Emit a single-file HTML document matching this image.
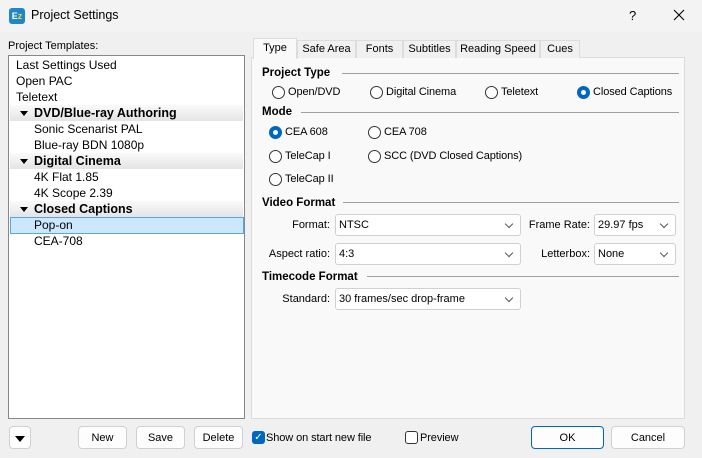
<!DOCTYPE html>
<html><head><meta charset="utf-8"><style>
*{margin:0;padding:0;box-sizing:border-box}
body{width:702px;height:458px;overflow:hidden;background:#f0f0f0;font-family:"Liberation Sans",sans-serif;font-size:11px;color:#000;position:relative}
.a{position:absolute;white-space:nowrap}
.li{position:absolute;left:16px;font-size:12px;line-height:16px}
.sub{left:34px}
.grp{position:absolute;left:10px;width:233px;height:16px;background:linear-gradient(#fafafa,#e4e4e4);font-weight:bold;font-size:12.5px;line-height:16px;padding-left:24px}
.grp:before{content:"";position:absolute;left:10px;top:6px;border-left:4px solid transparent;border-right:4px solid transparent;border-top:5px solid #000}
.tab{position:absolute;top:40px;height:18px;border:1px solid #dcdcdc;border-bottom:none;background:#f0f0f0;text-align:center;line-height:17px;font-size:11px}
.h{position:absolute;left:262px;font-weight:bold;font-size:11.5px;line-height:14px}
.line{position:absolute;height:1px;background:#a0a0a0}
.r{position:absolute;width:13px;height:13px;border:1px solid #333;border-radius:50%;background:#fff}
.r.on{background:#0067c0;border-color:#0067c0}
.r.on:after{content:"";position:absolute;left:3px;top:3px;width:5px;height:5px;border-radius:50%;background:#fff}
.t{position:absolute;font-size:11px;line-height:13px;letter-spacing:-0.1px}
.cb{position:absolute;height:22px;background:#fff;border:1px solid #d0d0d0;border-radius:3px;font-size:11px;line-height:21px;padding-left:3px}
.cb:after{content:"";position:absolute;right:8px;top:6px;width:5px;height:5px;border-right:1px solid #555;border-bottom:1px solid #555;transform:rotate(45deg)}
.lb{position:absolute;text-align:right;font-size:11px;line-height:13px}
.btn{position:absolute;top:426px;height:23px;background:#fdfdfd;border:1px solid #d0d0d0;border-radius:4px;text-align:center;line-height:22px;font-size:11px}
</style></head><body>
<div class="a" style="left:0;top:0;width:702px;height:32px;background:#f3f3f3"></div>
<div class="a" style="left:9px;top:8px;width:16px;height:16px;border-radius:3px;background:#1f87c9;color:#fff;font-size:9px;font-weight:bold;line-height:16px;text-align:center">E<span style="color:#ffd23c">z</span></div>
<div class="a" style="left:31px;top:8px;font-size:12.5px">Project Settings</div>
<div class="a" style="left:629px;top:8px;font-size:13px">?</div>
<svg class="a" style="left:673px;top:9px" width="12" height="12"><path d="M1 1L11 11M11 1L1 11" stroke="#000" stroke-width="1.1"/></svg>

<div class="a" style="left:8px;top:40px;font-size:11px">Project Templates:</div>
<div class="a" style="left:8px;top:55px;width:237px;height:364px;background:#fff;border:1px solid #828790"></div>
<div class="li" style="top:57px">Last Settings Used</div>
<div class="li" style="top:73px">Open PAC</div>
<div class="li" style="top:89px">Teletext</div>
<div class="grp" style="top:105px">DVD/Blue-ray Authoring</div>
<div class="li sub" style="top:121px">Sonic Scenarist PAL</div>
<div class="li sub" style="top:137px">Blue-ray BDN 1080p</div>
<div class="grp" style="top:153px">Digital Cinema</div>
<div class="li sub" style="top:169px">4K Flat 1.85</div>
<div class="li sub" style="top:185px">4K Scope 2.39</div>
<div class="grp" style="top:201px">Closed Captions</div>
<div class="a" style="left:10px;top:217px;width:234px;height:17px;background:#cce8ff;border:1px solid #5ba4dc"></div>
<div class="li sub" style="top:217px">Pop-on</div>
<div class="li sub" style="top:233px">CEA-708</div>

<div class="a" style="left:251px;top:57px;width:434px;height:362px;background:#f9f9f9;border:1px solid #dcdcdc"></div>
<div class="tab" style="left:297px;width:59px">Safe Area</div>
<div class="tab" style="left:356px;width:47px">Fonts</div>
<div class="tab" style="left:403px;width:53px">Subtitles</div>
<div class="tab" style="left:456px;width:84px">Reading Speed</div>
<div class="tab" style="left:540px;width:40px">Cues</div>
<div class="tab" style="left:253px;top:38px;width:44px;height:21px;background:#f9f9f9;line-height:19px">Type</div>

<div class="h" style="top:66px">Project Type</div><div class="line" style="left:342px;top:73px;width:337px"></div>
<div class="r" style="left:272px;top:86px"></div><div class="t" style="left:288px;top:86px">Open/DVD</div>
<div class="r" style="left:370px;top:86px"></div><div class="t" style="left:386px;top:86px">Digital Cinema</div>
<div class="r" style="left:485px;top:86px"></div><div class="t" style="left:501px;top:86px">Teletext</div>
<div class="r on" style="left:577px;top:86px"></div><div class="t" style="left:593px;top:86px">Closed Captions</div>

<div class="h" style="top:105px">Mode</div><div class="line" style="left:301px;top:112px;width:378px"></div>
<div class="r on" style="left:269px;top:126px"></div><div class="t" style="left:285px;top:126px">CEA 608</div>
<div class="r" style="left:368px;top:126px"></div><div class="t" style="left:384px;top:126px">CEA 708</div>
<div class="r" style="left:269px;top:150px"></div><div class="t" style="left:285px;top:150px">TeleCap I</div>
<div class="r" style="left:368px;top:150px"></div><div class="t" style="left:384px;top:150px">SCC (DVD Closed Captions)</div>
<div class="r" style="left:269px;top:173px"></div><div class="t" style="left:285px;top:173px">TeleCap II</div>

<div class="h" style="top:196px">Video Format</div><div class="line" style="left:343px;top:202px;width:336px"></div>
<div class="lb" style="left:260px;width:70px;top:219px">Format:</div>
<div class="cb" style="left:335px;top:214px;width:186px">NTSC</div>
<div class="lb" style="left:520px;width:70px;top:219px">Frame Rate:</div>
<div class="cb" style="left:594px;top:214px;width:82px">29.97 fps</div>
<div class="lb" style="left:260px;width:70px;top:248px">Aspect ratio:</div>
<div class="cb" style="left:335px;top:243px;width:186px">4:3</div>
<div class="lb" style="left:520px;width:70px;top:248px">Letterbox:</div>
<div class="cb" style="left:594px;top:243px;width:82px">None</div>

<div class="h" style="top:270px">Timecode Format</div><div class="line" style="left:367px;top:276px;width:312px"></div>
<div class="lb" style="left:260px;width:70px;top:293px">Standard:</div>
<div class="cb" style="left:335px;top:288px;width:186px">30 frames/sec drop-frame</div>

<div class="btn" style="left:9px;width:22px"><span style="position:absolute;left:5px;top:9px;border-left:5px solid transparent;border-right:5px solid transparent;border-top:6px solid #000"></span></div>
<div class="btn" style="left:78px;width:49px">New</div>
<div class="btn" style="left:136px;width:49px">Save</div>
<div class="btn" style="left:194px;width:49px">Delete</div>
<div class="a" style="left:252px;top:431px;width:13px;height:13px;background:#0067c0;border-radius:3px;color:#fff;font-size:10px;line-height:13px;text-align:center">✓</div>
<div class="t" style="left:266px;top:432px">Show on start new file</div>
<div class="a" style="left:405px;top:431px;width:13px;height:13px;border:1px solid #333;border-radius:3px;background:#fff"></div>
<div class="t" style="left:420px;top:432px">Preview</div>
<div class="btn" style="left:531px;width:73px;border-color:#0067c0">OK</div>
<div class="btn" style="left:611px;width:74px">Cancel</div>
</body></html>
